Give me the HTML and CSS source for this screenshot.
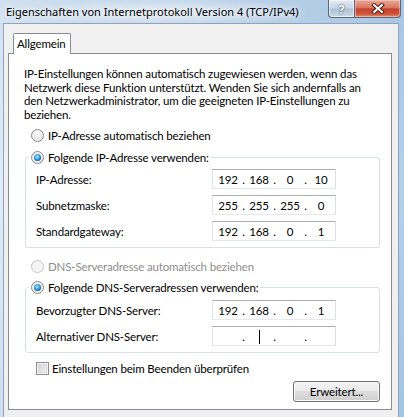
FILE: index.html
```html
<!DOCTYPE html>
<html lang="de">
<head>
    <meta charset="UTF-8">
    <meta name="viewport" content="width=device-width, initial-scale=1.0">
    <title>Eigenschaften von Internetprotokoll Version 4 (TCP/IPv4)</title>
    <link rel="stylesheet" href="styles.css">
</head>
<body>
    <div class="window">
        <div class="titlebar">
            <span class="caption">Eigenschaften von Internetprotokoll Version 4 (TCP/IPv4)</span>
            <div class="caption-buttons">
                <span class="cb help">?</span>
                <span class="cb close">
                    <svg width="14" height="11" viewBox="0 0 14 11">
                        <path d="M3 2 L11 9 M11 2 L3 9" stroke="#4a1d16" stroke-width="4" stroke-linecap="square"/>
                        <path d="M3 2 L11 9 M11 2 L3 9" stroke="#fff" stroke-width="2" stroke-linecap="square"/>
                    </svg>
                </span>
            </div>
        </div>
        <div class="client">
            <div class="tabs">
                <span class="tab active">Allgemein</span>
            </div>
            <div class="panel">
                <p class="intro">IP-Einstellungen können automatisch zugewiesen werden, wenn das<br>Netzwerk diese Funktion unterstützt. Wenden Sie sich andernfalls an<br>den Netzwerkadministrator, um die geeigneten IP-Einstellungen zu<br>beziehen.</p>

                <div class="opt"><span class="radio"></span>IP-Adresse automatisch beziehen</div>

                <fieldset class="group">
                    <legend class="opt"><span class="radio on"></span>Folgende IP-Adresse verwenden:</legend>
                    <div class="field">
                        <span class="label">IP-Adresse:</span>
                        <div class="ip"><span class="oct">192</span><span class="dot">.</span><span class="oct">168</span><span class="dot">.</span><span class="oct">0</span><span class="dot">.</span><span class="oct">10</span></div>
                    </div>
                    <div class="field">
                        <span class="label">Subnetzmaske:</span>
                        <div class="ip"><span class="oct">255</span><span class="dot">.</span><span class="oct">255</span><span class="dot">.</span><span class="oct">255</span><span class="dot">.</span><span class="oct">0</span></div>
                    </div>
                    <div class="field">
                        <span class="label">Standardgateway:</span>
                        <div class="ip"><span class="oct">192</span><span class="dot">.</span><span class="oct">168</span><span class="dot">.</span><span class="oct">0</span><span class="dot">.</span><span class="oct">1</span></div>
                    </div>
                </fieldset>

                <div class="opt disabled"><span class="radio"></span>DNS-Serveradresse automatisch beziehen</div>

                <fieldset class="group dns">
                    <legend class="opt"><span class="radio on"></span>Folgende DNS-Serveradressen verwenden:</legend>
                    <div class="field">
                        <span class="label">Bevorzugter DNS-Server:</span>
                        <div class="ip"><span class="oct">192</span><span class="dot">.</span><span class="oct">168</span><span class="dot">.</span><span class="oct">0</span><span class="dot">.</span><span class="oct">1</span></div>
                    </div>
                    <div class="field">
                        <span class="label">Alternativer DNS-Server:</span>
                        <div class="ip"><span class="oct"></span><span class="dot">.</span><span class="oct"><span class="caret"></span></span><span class="dot">.</span><span class="oct"></span><span class="dot">.</span><span class="oct"></span></div>
                    </div>
                </fieldset>

                <div class="check-row"><span class="checkbox"></span>Einstellungen beim Beenden überprüfen</div>

                <div class="actions">
                    <button type="button" class="btn">Erweitert...</button>
                </div>
            </div>
        </div>
    </div>
</body>
</html>
```

FILE: styles.css
```css
body
{
    margin:0;
    font-family:Lato, "Noto Sans", sans-serif;
    font-size:11.5px;
    letter-spacing:-0.15px;
    color:#000;
}
.window
{
    width:404px;
    height:417px;
    overflow:hidden;
    display:flex;
    flex-direction:column;
    background:
        radial-gradient(ellipse 140px 14px at 170px 12px, rgba(255,255,255,.55), transparent),
        linear-gradient(to right, rgba(255,255,255,.25), rgba(150,185,220,.2) 60%, rgba(120,165,210,.35)),
        linear-gradient(to bottom, #c3d7ec, #d6e5f4 45%, #bcd3eb);
}

/* title bar */
.titlebar
{
    height:23px;
    flex:none;
    display:flex;
    align-items:flex-start;
    padding:0 3px 0 6px;
}
.caption
{
    font-family:"Noto Sans", sans-serif;
    font-size:11px;
    letter-spacing:0;
    line-height:24px;
    white-space:nowrap;
    text-shadow:0 0 6px #fff, 0 0 10px #fff;
}
.caption-buttons
{
    margin-left:auto;
    display:flex;
}
.cb
{
    height:18px;
    box-sizing:border-box;
    display:flex;
    align-items:center;
    justify-content:center;
    border:1px solid #55657c;
    border-top:none;
}
.help
{
    width:26px;
    border-right:none;
    border-radius:0 0 0 4px;
    background:linear-gradient(#e3ebf5, #c9d6e6 48%, #afc0d6 52%, #cbd9ea);
    box-shadow:inset 0 0 0 1px rgba(255,255,255,.6);
    color:#fff;
    font-family:"Noto Sans", sans-serif;
    font-weight:bold;
    font-size:13px;
    text-shadow:0 0 1px #3c4a5c, 0 0 2px #3c4a5c;
}
.close
{
    width:47px;
    border-radius:0 0 4px 0;
    background:linear-gradient(#eaa898, #d97862 45%, #c8442e 52%, #cf5038 80%, #e39072);
    box-shadow:inset 0 0 0 1px rgba(255,220,210,.5);
}

/* client area */
.client
{
    flex:1;
    margin:0 5px 0 3px;
    padding:9px 6px 0 4px;
    background:#f0f0f0;
    border:1px solid #8ea3bc;
    border-bottom:none;
}
.tabs
{
    display:flex;
    padding-left:5px;
    height:20px;
}
.tab
{
    width:58px;
    height:21px;
    box-sizing:border-box;
    padding-left:3px;
    line-height:20px;
    background:#fff;
    border:1px solid #898c95;
    border-bottom:none;
    border-radius:2px 2px 0 0;
    position:relative;
    z-index:1;
}
.panel
{
    height:357px;
    box-sizing:border-box;
    padding:0 11px 0 15px;
    background:#fff;
    border:1px solid #898c95;
}
.intro
{
    margin:13px 0 0;
    line-height:13.5px;
    white-space:nowrap;
}

/* radio options */
.opt
{
    display:flex;
    align-items:center;
    height:16px;
    margin-top:6px;
    padding-left:7px;
    white-space:nowrap;
}
.opt.disabled
{
    margin-top:10px;
    color:#8d8d8d;
}
.radio
{
    width:13px;
    height:13px;
    box-sizing:border-box;
    margin-right:4px;
    border-radius:50%;
    border:1px solid #8a8a8a;
    background:radial-gradient(circle at 50% 35%, #ffffff, #e2e2e2 70%, #cfcfcf);
    box-shadow:inset 0 0 0 1px #f6f6f6;
    display:flex;
    align-items:center;
    justify-content:center;
}
.disabled .radio
{
    border-color:#c5c5c5;
    background:#f4f4f4;
}
.radio.on::after
{
    content:"";
    width:7px;
    height:7px;
    border-radius:50%;
    background:radial-gradient(circle at 45% 40%, #b4ecff, #3ea6e6 40%, #0f4d8f 80%, #0b2f63);
}

/* group boxes */
.group
{
    margin:6px 0 0 1px;
    min-width:0;
    padding:4px 0 6px 10px;
    border:1px solid #d5dfe5;
    border-radius:3px;
}
.group.dns
{
    margin-top:5px;
    padding-top:5px;
}
.group legend
{
    margin:0 0 0 -7px;
    padding:0 2px;
    background:#fff;
}
.field
{
    display:flex;
    align-items:center;
    height:20px;
}
.field + .field
{
    margin-top:6px;
}
.label
{
    width:176px;
}
.ip
{
    width:124px;
    height:20px;
    box-sizing:border-box;
    display:flex;
    align-items:center;
    padding-left:2px;
    border:1px solid;
    border-color:#abadb3 #dbdfe6 #e3e9ef #e2e3ea;
}
.oct
{
    width:26px;
    text-align:center;
}
.dot
{
    width:5px;
    text-align:center;
}
.caret
{
    display:inline-block;
    width:1px;
    height:14px;
    background:#000;
    vertical-align:middle;
}

/* checkbox and button */
.check-row
{
    display:flex;
    align-items:center;
    height:16px;
    margin-top:7px;
    padding-left:12px;
    white-space:nowrap;
}
.checkbox
{
    width:13px;
    height:13px;
    box-sizing:border-box;
    margin-right:3px;
    border:1px solid #8e8f8f;
    background:linear-gradient(135deg, #c9ccd1, #f7f7f7);
    box-shadow:inset 0 0 0 1px #f4f4f4, inset 0 0 0 2px #dadada;
}
.actions
{
    display:flex;
    justify-content:flex-end;
    margin-top:5px;
}
.btn
{
    width:87px;
    height:21px;
    padding:0;
    font:inherit;
    letter-spacing:inherit;
    color:#000;
    border:1px solid #707070;
    border-radius:3px;
    background:linear-gradient(#f2f2f2, #ebebeb 50%, #dddddd 50%, #cfcfcf);
    box-shadow:inset 0 0 0 1px #fcfcfc;
}
```
